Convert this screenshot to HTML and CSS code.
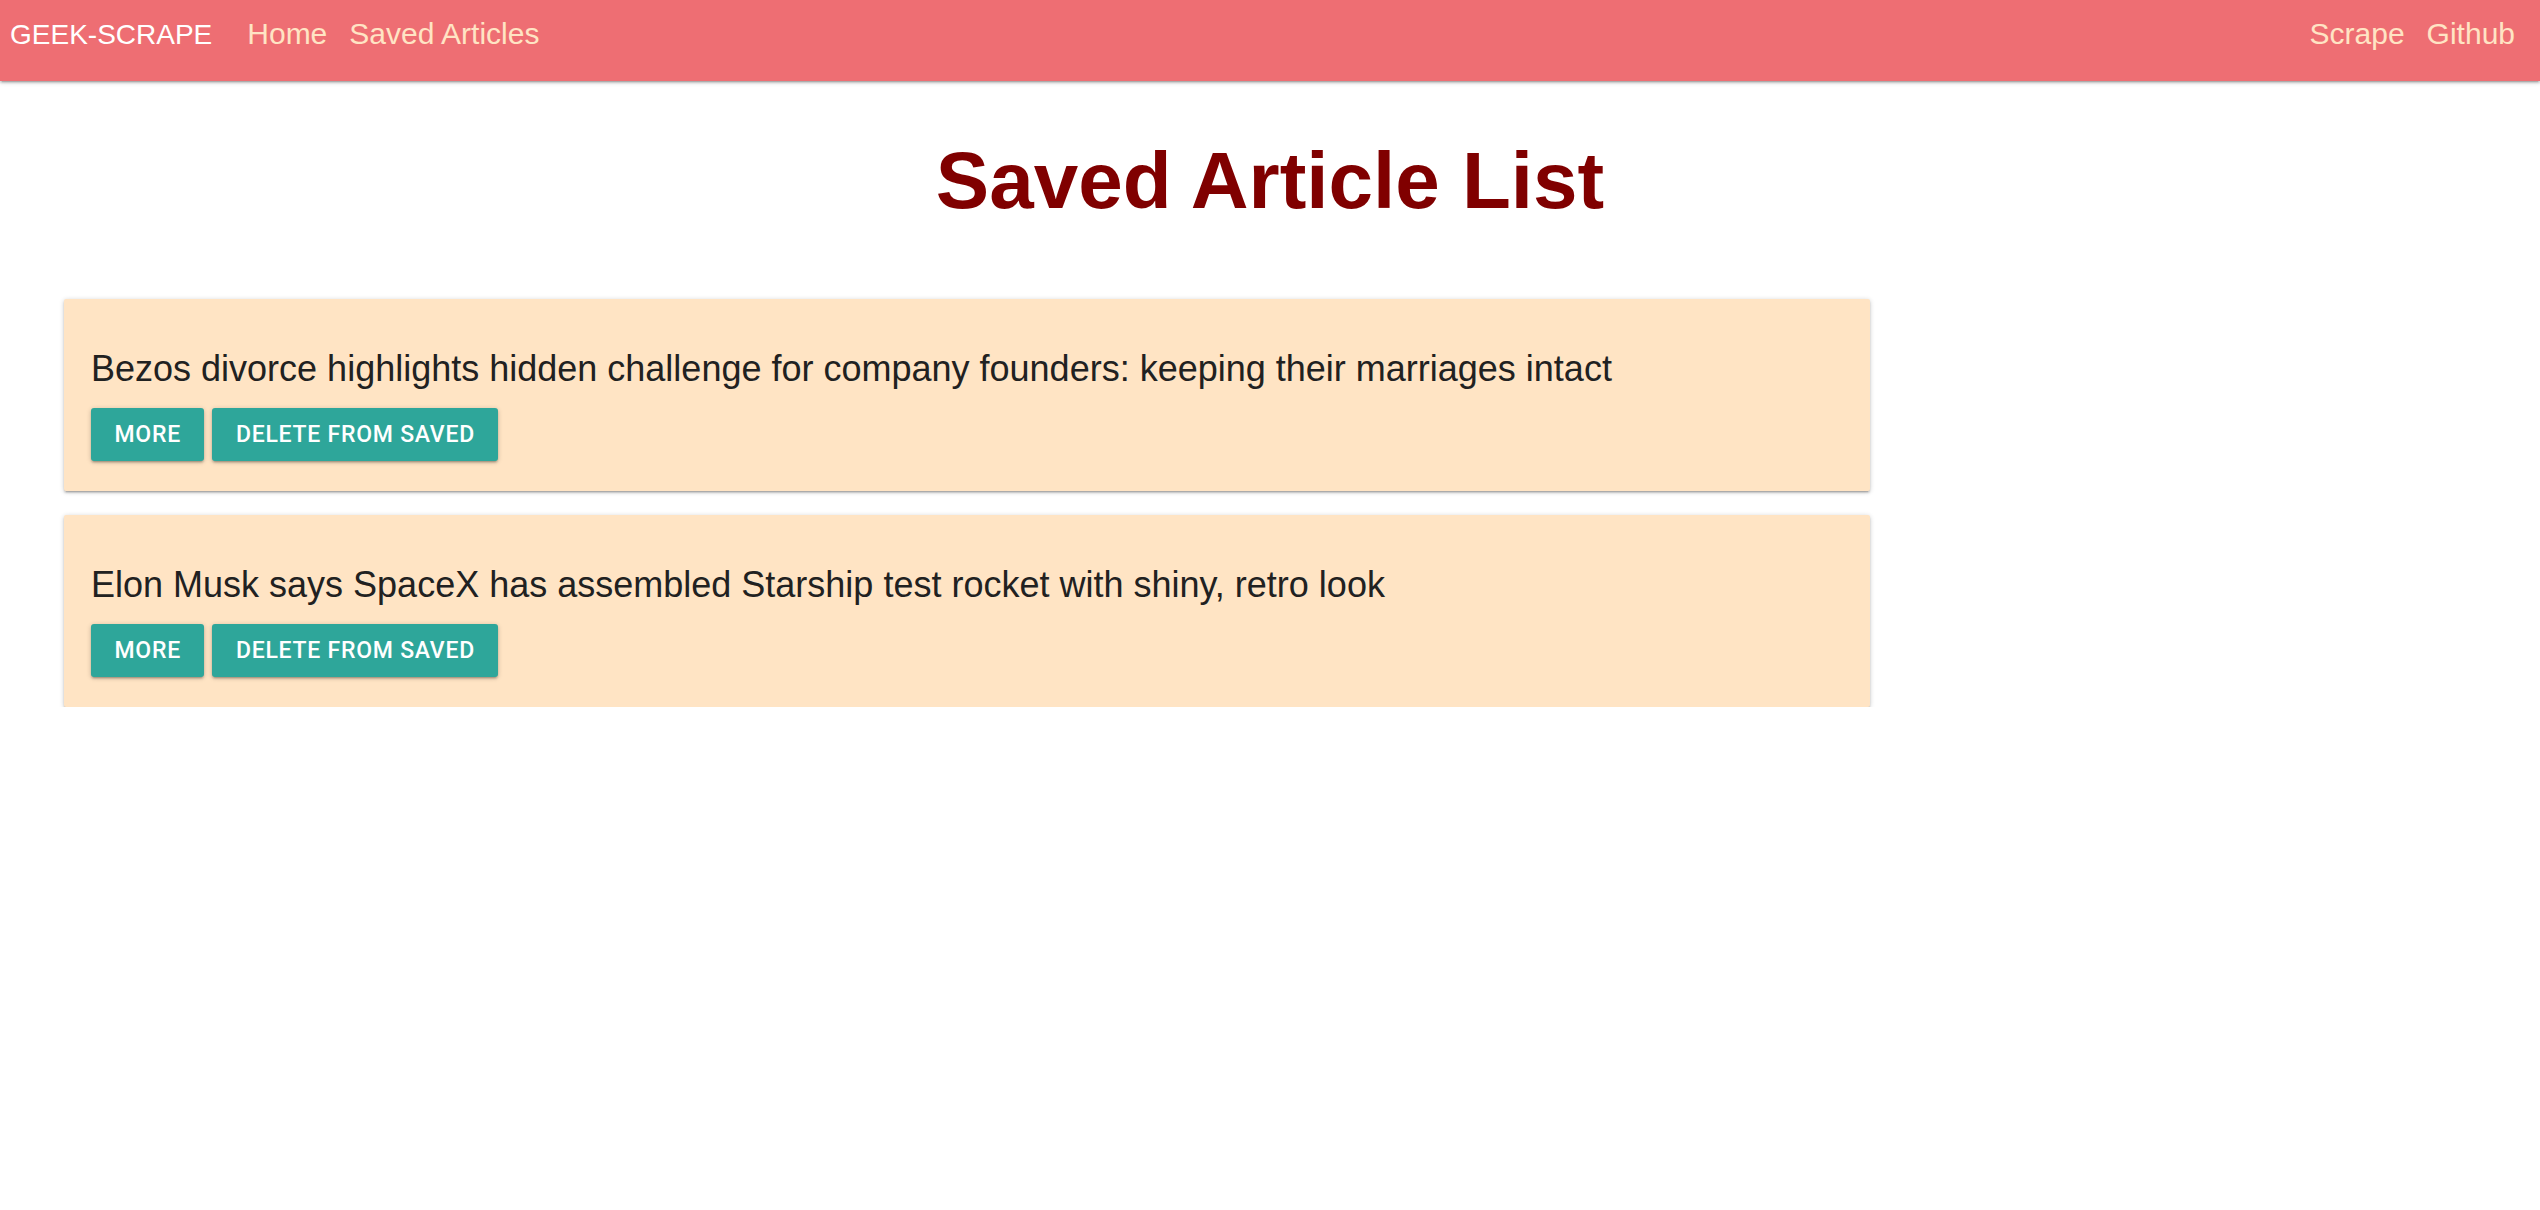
FILE: index.html
```html
<!DOCTYPE html>
<html lang="en">
<head>
<meta charset="utf-8">
<title>Geek-Scrape - Saved Articles</title>
<link rel="stylesheet" href="styles.css">
</head>
<body>
<nav class="nav">
  <a class="brand" href="#">GEEK-SCRAPE</a>
  <ul class="links">
    <li><a href="#">Home</a></li>
    <li><a href="#">Saved Articles</a></li>
  </ul>
  <ul class="links links-right">
    <li><a href="#">Scrape</a></li>
    <li><a href="#">Github</a></li>
  </ul>
</nav>
<header class="page-head">
  <h1 class="title">Saved Article List</h1>
</header>
<main class="list">
  <section class="card">
    <p class="card-title">Bezos divorce highlights hidden challenge for company founders: keeping their marriages intact</p>
    <div class="actions">
      <a class="btn" href="#">More</a>
      <a class="btn" href="#">Delete from saved</a>
    </div>
  </section>
  <section class="card">
    <p class="card-title">Elon Musk says SpaceX has assembled Starship test rocket with shiny, retro look</p>
    <div class="actions">
      <a class="btn" href="#">More</a>
      <a class="btn" href="#">Delete from saved</a>
    </div>
  </section>
</main>
</body>
</html>
```
FILE: styles.css
```css
* { box-sizing: border-box; }
html, body { margin: 0; padding: 0; background: #fff; }
body { font-family: "Liberation Sans", Arial, sans-serif; color: #212121; }
a { text-decoration: none; }

.nav {
  height: 81px;
  background: #ee6e73;
  display: flex;
  align-items: baseline;
  padding: 17px 14px 0 10px;
  box-shadow: 0 2px 2px 0 rgba(0,0,0,.14), 0 3px 1px -2px rgba(0,0,0,.12), 0 1px 5px 0 rgba(0,0,0,.2);
  position: relative;
  z-index: 2;
}
.brand {
  color: #fff;
  font-size: 28px;
  line-height: 34px;
  margin-right: 24px;
}
.links {
  list-style: none;
  margin: 0;
  padding: 0;
  display: flex;
  align-items: baseline;
}
.links a {
  display: block;
  color: #ffe4c4;
  font-size: 30px;
  line-height: 34px;
  padding: 0 11px;
}
.links-right { margin-left: auto; }

.page-head {
  padding-top: 60px;
  text-align: center;
}
.title {
  margin: 0;
  font-size: 80px;
  line-height: 80px;
  font-weight: 700;
  color: #800000;
}

.list {
  width: 1806px;
  margin: 78px 0 0 64px;
  display: flex;
  flex-direction: column;
  gap: 24px;
}
.card {
  background: #ffe4c4;
  border-radius: 2px;
  padding: 49px 27px 30px;
  box-shadow: 0 2px 2px 0 rgba(0,0,0,.14), 0 3px 1px -2px rgba(0,0,0,.12), 0 1px 5px 0 rgba(0,0,0,.2);
}
.card-title {
  margin: 0 0 19px;
  font-size: 36px;
  line-height: 41px;
}
.actions {
  display: flex;
  gap: 8px;
}
.btn {
  display: block;
  height: 53px;
  line-height: 53px;
  padding: 0 23.5px;
  background: #2ea69a;
  color: #fff;
  font-family: Roboto, "Liberation Sans", sans-serif;
  font-weight: 500;
  font-size: 23px;
  letter-spacing: 0.75px;
  text-transform: uppercase;
  border-radius: 3px;
  box-shadow: 0 2px 2px 0 rgba(0,0,0,.14), 0 3px 1px -2px rgba(0,0,0,.12), 0 1px 5px 0 rgba(0,0,0,.2);
}
```
